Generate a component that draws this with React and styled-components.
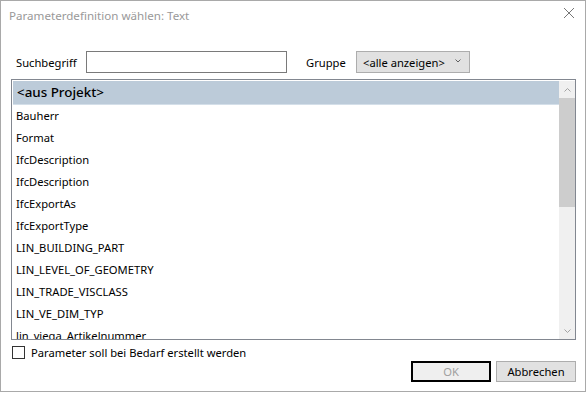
import React from "react";
import styled, { createGlobalStyle } from "styled-components";

const Global = createGlobalStyle`
  html, body { margin: 0; padding: 0; width: 586px; height: 393px; overflow: hidden; background: #fff; }
  body { font-family: "Noto Sans", "Open Sans", sans-serif; font-size: 11.2px; color: #000; }
  * { box-sizing: border-box; }
`;

const Window = styled.div`
  width: 586px;
  height: 392px;
  border: 1px solid #a9a9a9;
  background: #fff;
  display: flex;
  flex-direction: column;
`;

const TitleBar = styled.div`
  height: 30px;
  display: flex;
  align-items: center;
  justify-content: space-between;
  padding: 0 10px 2px 8px;
`;

const Title = styled.div`
  color: #999;
  font-size: 11.6px;
`;

const Close = styled.div`
  width: 12px;
  height: 12px;
  display: flex;
  margin-top: -4px;
`;

const Body = styled.div`
  flex: 1;
  display: flex;
  flex-direction: column;
  padding: 20px 9px 0 10px;
`;

const SearchRow = styled.div`
  display: flex;
  align-items: center;
  height: 22px;
  padding-left: 5px;
`;

const Label = styled.span`
  width: ${(p) => p.$width}px;
  flex: none;
  white-space: nowrap;
`;

const TextInput = styled.div`
  width: 201px;
  height: 22px;
  border: 1px solid #7a7a7a;
  background: #fff;
  margin-right: 19px;
`;

const Select = styled.div`
  width: 114px;
  height: 22px;
  border: 1px solid #adadad;
  background: #e1e1e1;
  display: flex;
  align-items: center;
  justify-content: space-between;
  padding: 0 8px 2px 6px;
`;

const SelectText = styled.span`
  margin-top: 2px;
`;

const ListBox = styled.div`
  margin-top: 6px;
  height: 261px;
  border: 1px solid #828790;
  display: flex;
  overflow: hidden;
  padding: 1px 0 0 1px;
`;

const Items = styled.div`
  flex: 1;
  display: flex;
  flex-direction: column;
  overflow: hidden;
`;

const Item = styled.div`
  flex: none;
  height: ${(p) => (p.$selected ? 24 : 22)}px;
  line-height: ${(p) => (p.$selected ? 23 : 22)}px;
  padding-left: ${(p) => (p.$selected ? 4 : 3)}px;
  white-space: nowrap;
  background: ${(p) => (p.$selected ? "#bccbd9" : "transparent")};
  border-bottom: ${(p) => (p.$selected ? "1px solid #d4dfe9" : "none")};
  font-size: ${(p) => (p.$selected ? 13.4 : 11.2)}px;
  font-weight: ${(p) => (p.$selected ? 500 : 400)};
`;

const ScrollBar = styled.div`
  width: 16px;
  flex: none;
  background: #f0f0f0;
  display: flex;
  flex-direction: column;
`;

const ScrollArrow = styled.div`
  height: 17px;
  display: flex;
  align-items: center;
  justify-content: center;
`;

const Thumb = styled.div`
  height: 109px;
  background: #cdcdcd;
`;

const Track = styled.div`
  flex: 1;
`;

const CheckRow = styled.div`
  display: flex;
  align-items: center;
  margin-top: 5px;
  padding-left: 1px;
  height: 15px;
`;

const Box = styled.div`
  width: 13px;
  height: 13px;
  border: 1px solid #333;
  background: #fff;
  margin-right: 6px;
`;

const ButtonRow = styled.div`
  display: flex;
  justify-content: flex-end;
  gap: 5px;
  margin-top: 1px;
`;

const Button = styled.div`
  width: 80px;
  height: 21px;
  display: flex;
  align-items: center;
  justify-content: center;
  background: ${(p) => (p.$default ? "#efefef" : "#e1e1e1")};
  border: ${(p) => (p.$default ? "2px solid #000" : "1px solid #adadad")};
  color: ${(p) => (p.$disabled ? "#a0a0a0" : "#000")};
`;

const items = [
  "Bauherr",
  "Format",
  "IfcDescription",
  "IfcDescription",
  "IfcExportAs",
  "IfcExportType",
  "LIN_BUILDING_PART",
  "LIN_LEVEL_OF_GEOMETRY",
  "LIN_TRADE_VISCLASS",
  "LIN_VE_DIM_TYP",
  "lin_viega_Artikelnummer",
];

export default function App() {
  return (
    <>
      <Global />
      <Window>
        <TitleBar>
          <Title>Parameterdefinition wählen: Text</Title>
          <Close>
            <svg width="12" height="12" viewBox="0 0 12 12">
              <path d="M1 1L11 11M11 1L1 11" stroke="#777" strokeWidth="1" />
            </svg>
          </Close>
        </TitleBar>
        <Body>
          <SearchRow>
            <Label $width={70}>Suchbegriff</Label>
            <TextInput />
            <Label $width={50}>Gruppe</Label>
            <Select>
              <SelectText>&lt;alle anzeigen&gt;</SelectText>
              <svg width="6" height="4" viewBox="0 0 6 4">
                <path d="M0.5 0.5L3 3L5.5 0.5" stroke="#606060" fill="none" strokeWidth="1" />
              </svg>
            </Select>
          </SearchRow>
          <ListBox>
            <Items>
              <Item $selected>&lt;aus Projekt&gt;</Item>
              {items.map((t, i) => (
                <Item key={i}>{t}</Item>
              ))}
            </Items>
            <ScrollBar>
              <ScrollArrow>
                <svg width="7" height="4" viewBox="0 0 7 4">
                  <path d="M0.5 3.5L3.5 0.5L6.5 3.5" stroke="#a3a3a3" fill="none" />
                </svg>
              </ScrollArrow>
              <Thumb />
              <Track />
              <ScrollArrow>
                <svg width="7" height="4" viewBox="0 0 7 4">
                  <path d="M0.5 0.5L3.5 3.5L6.5 0.5" stroke="#a3a3a3" fill="none" />
                </svg>
              </ScrollArrow>
            </ScrollBar>
          </ListBox>
          <CheckRow>
            <Box />
            <span>Parameter soll bei Bedarf erstellt werden</span>
          </CheckRow>
          <ButtonRow>
            <Button $default $disabled>OK</Button>
            <Button>Abbrechen</Button>
          </ButtonRow>
        </Body>
      </Window>
    </>
  );
}
